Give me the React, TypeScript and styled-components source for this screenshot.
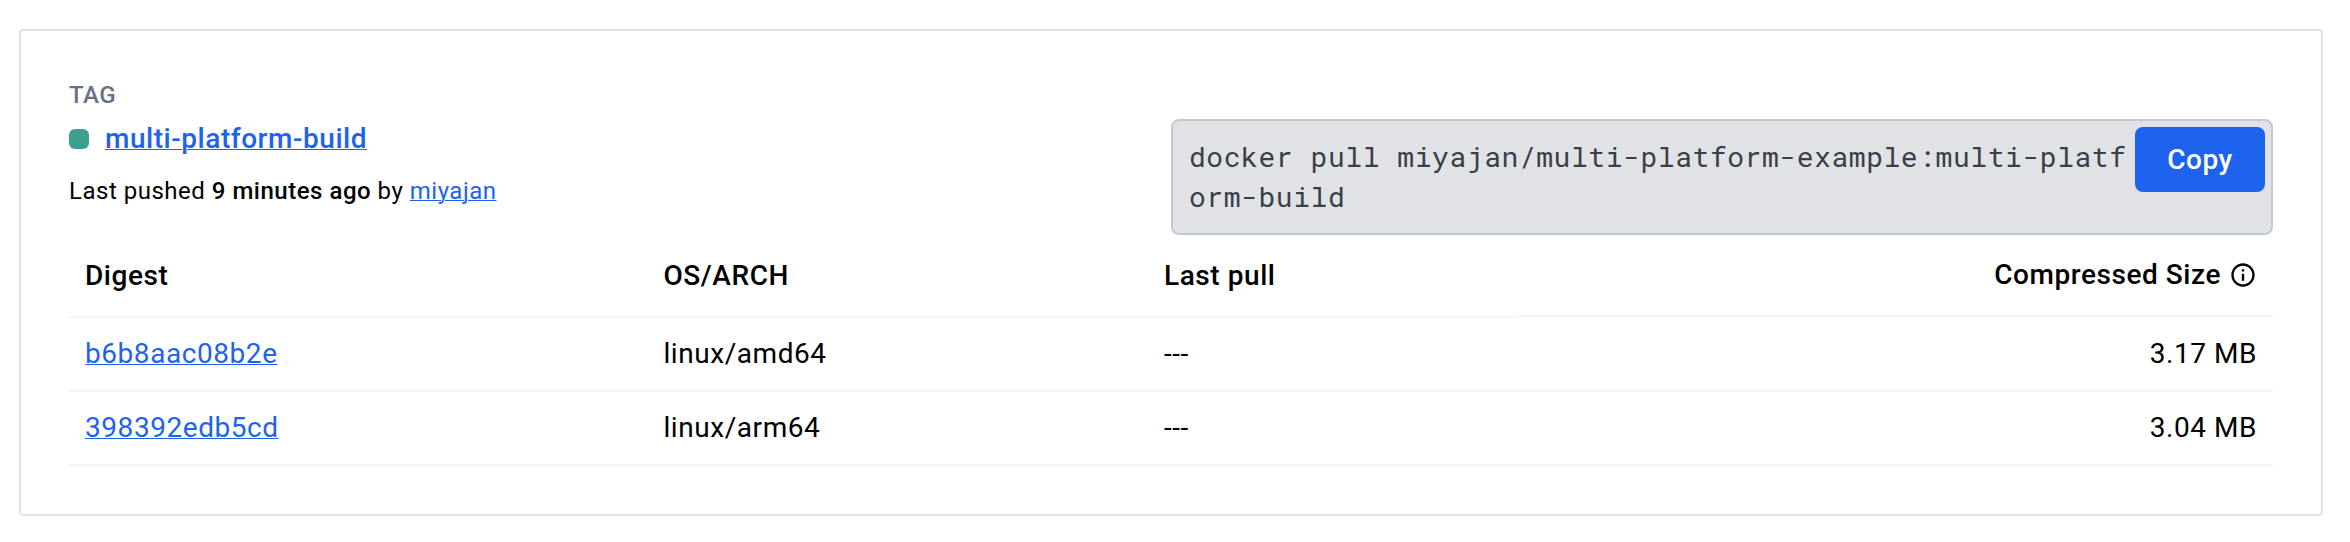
import React from 'react';
import styled, { createGlobalStyle } from 'styled-components';

const Global = createGlobalStyle`
  * { box-sizing: border-box; }
  body {
    margin: 0;
    background: #fff;
    color: #000;
    font: 400 28px/40px Roboto, sans-serif;
    letter-spacing: 0.02em;
  }
`;

const Card = styled.main`
  margin: 29px 27px 0 19px;
  height: 487px;
  padding: 0 48px;
  border: 2px solid #e1e2e6;
  border-radius: 4px;
`;

const Head = styled.header`
  display: flex;
  justify-content: space-between;
  align-items: flex-end;
  height: 204px;
`;

const Summary = styled.div`
  height: 157px;
`;

const Label = styled.div`
  font-size: 24px;
  font-weight: 500;
  line-height: 34px;
  letter-spacing: 0.02em;
  color: #677285;
`;

const TagLine = styled.div`
  display: flex;
  align-items: center;
  gap: 16px;
  height: 40px;
  margin-top: 7px;
  font-weight: 500;
  letter-spacing: 0.54px;
`;

const Dot = styled.span`
  width: 20px;
  height: 20px;
  border-radius: 6px;
  background: #3ba08d;
`;

const Link = styled.a`
  color: #1d63ed;
  text-decoration: underline;
  text-decoration-thickness: 1px;
  text-underline-offset: 1px;
`;

const Pushed = styled.div`
  margin-top: 15px;
  font-size: 24px;
  line-height: 34px;
  letter-spacing: 0.51px;
`;

const Strong = styled.b`
  font-weight: 500;
`;

const Command = styled.div`
  display: flex;
  width: 1102px;
  height: 116px;
  padding: 6px 6px 0 16px;
  border: 2px solid #c4c8d1;
  border-radius: 8px;
  background: #e1e2e6;
`;

const Code = styled.code`
  flex: 1;
  padding-top: 10px;
  color: #393f49;
  font: 28px/40px 'Roboto Mono', 'DejaVu Sans Mono', monospace;
  letter-spacing: 0.02em;
  word-break: break-all;
`;

const Copy = styled.button`
  width: 130px;
  height: 65px;
  padding: 0;
  border: 0;
  border-radius: 8px;
  background: #1d63ed;
  color: #fff;
  font: 500 28px Roboto, sans-serif;
  letter-spacing: 0.02em;
`;

const Row = styled.div`
  display: grid;
  grid-template-columns: 578.5px 500.5px 368px 1fr;
  align-items: start;
`;

const Cell = styled.div<{ $head?: boolean; $end?: boolean }>`
  display: flex;
  align-items: center;
  justify-content: ${p => (p.$end ? 'flex-end' : 'flex-start')};
  gap: 8px;
  height: ${p => (p.$head ? (p.$end ? 82 : 83) : 74)}px;
  padding: 0 16px;
  border-bottom: 2px solid #f3f3f4;
  font-weight: ${p => (p.$head ? 500 : 400)};
`;

const InfoIcon = () => (
  <svg width="28" height="28" viewBox="0 0 24 24" fill="currentColor">
    <path d="M11 7h2v2h-2zm0 4h2v6h-2zm1-9C6.48 2 2 6.48 2 12s4.48 10 10 10 10-4.48 10-10S17.52 2 12 2zm0 18c-4.41 0-8-3.59-8-8s3.59-8 8-8 8 3.59 8 8-3.59 8-8 8z" />
  </svg>
);

const images = [
  { digest: 'b6b8aac08b2e', arch: 'linux/amd64', size: '3.17 MB' },
  { digest: '398392edb5cd', arch: 'linux/arm64', size: '3.04 MB' },
];

export default function App() {
  return (
    <>
      <Global />
      <Card>
        <Head>
          <Summary>
            <Label>TAG</Label>
            <TagLine>
              <Dot />
              <Link>multi-platform-build</Link>
            </TagLine>
            <Pushed>
              Last pushed <Strong>9 minutes ago</Strong> by <Link>miyajan</Link>
            </Pushed>
          </Summary>
          <Command>
            <Code>docker pull miyajan/multi-platform-example:multi-platform-build</Code>
            <Copy>Copy</Copy>
          </Command>
        </Head>
        <div role="table">
          <Row role="row">
            <Cell role="columnheader" $head>Digest</Cell>
            <Cell role="columnheader" $head>OS/ARCH</Cell>
            <Cell role="columnheader" $head>Last pull</Cell>
            <Cell role="columnheader" $head $end>
              Compressed Size
              <InfoIcon />
            </Cell>
          </Row>
          {images.map(image => (
            <Row role="row" key={image.digest}>
              <Cell role="cell"><Link>{image.digest}</Link></Cell>
              <Cell role="cell">{image.arch}</Cell>
              <Cell role="cell">---</Cell>
              <Cell role="cell" $end>{image.size}</Cell>
            </Row>
          ))}
        </div>
      </Card>
    </>
  );
}
